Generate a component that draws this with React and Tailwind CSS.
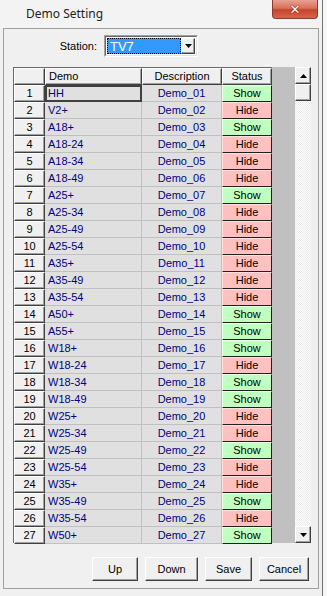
import React from "react";

const rows = [
  ["HH", "Show"], ["V2+", "Hide"], ["A18+", "Show"], ["A18-24", "Hide"], ["A18-34", "Hide"],
  ["A18-49", "Hide"], ["A25+", "Show"], ["A25-34", "Hide"], ["A25-49", "Hide"], ["A25-54", "Hide"],
  ["A35+", "Hide"], ["A35-49", "Hide"], ["A35-54", "Hide"], ["A50+", "Show"], ["A55+", "Show"],
  ["W18+", "Show"], ["W18-24", "Hide"], ["W18-34", "Show"], ["W18-49", "Show"], ["W25+", "Hide"],
  ["W25-34", "Hide"], ["W25-49", "Show"], ["W25-54", "Hide"], ["W35+", "Hide"], ["W35-49", "Show"],
  ["W35-54", "Hide"], ["W50+", "Show"],
];

const raised =
  "border-t border-l border-t-white border-l-white border-r border-b border-r-[#404040] border-b-[#404040] shadow-[inset_-1px_-1px_0_#a0a0a0]";

function Btn({ w, children }) {
  return (
    <div
      className={`${w} h-[24px] flex items-center justify-center bg-[#f0f0f0] text-black ${raised}`}
    >
      {children}
    </div>
  );
}

export default function App() {
  return (
    <div
      className="w-[327px] h-[596px] flex bg-[#f0f0f0] overflow-hidden text-[11px] leading-none text-black"
      style={{ fontFamily: '"Liberation Sans", Arial, sans-serif' }}
    >
      <div className="w-[322px] flex flex-col">
        {/* Title bar */}
        <div className="h-[28px] flex items-start relative bg-[#f3f3f3]">
          <span
            className="pl-[26px] pt-[8px] text-[12px] text-[#1e1e1e]"
            style={{ fontFamily: '"Noto Sans", "Open Sans", sans-serif' }}
          >
            Demo Setting
          </span>
          <div className="absolute top-0 left-[272px] w-[46px] h-[19px] rounded-b-[4px] border border-t-0 border-[#8c3a2e] bg-[linear-gradient(#e8a193_0%,#d9705c_45%,#c7432b_55%,#d5654f_100%)] flex items-center justify-center">
            <span
              className="text-white text-[13px] font-bold leading-none"
              style={{ textShadow: "0 0 1px #5a1a10, 0 0 1px #5a1a10", fontFamily: '"DejaVu Sans", sans-serif' }}
            >
              ✕
            </span>
          </div>
        </div>

        {/* Panel */}
        <div className="ml-[3px] w-[316px] h-[561px] border border-[#a0a0a0] bg-[#f0f0f0] flex flex-col">
          {/* Station row */}
          <div className="mt-[6px] h-[22px] flex items-center">
            <span className="w-[100px] text-right pr-[7px] text-[11px]">Station:</span>
            <div className="w-[94px] h-[22px] border border-t-[#a0a0a0] border-l-[#a0a0a0] border-r-white border-b-white">
              <div className="w-full h-full border border-t-[#696969] border-l-[#696969] border-r-[#e3e3e3] border-b-[#e3e3e3] bg-white flex items-center p-[1px]">
                <div className="w-[75px] h-[16px] bg-[#3399ff] border border-dotted border-[#ff9900] outline outline-1 outline-dotted outline-black -outline-offset-1 flex items-center pl-[2px] text-white text-[13px]">
                  TV7
                </div>
                <div className={`ml-auto w-[14px] h-[16px] bg-[#f0f0f0] ${raised} flex items-center justify-center`}>
                  <svg width="7" height="4" viewBox="0 0 7 4"><path d="M0 0h7L3.5 4z" fill="#000" /></svg>
                </div>
              </div>
            </div>
          </div>

          {/* Grid */}
          <div className="mt-[10px] ml-[9px] w-[298px] h-[476px] flex">
            <div className="w-[259px] flex flex-col border-l border-t border-[#696969]">
              {/* header */}
              <div className="h-[17px] flex shrink-0">
                <div className={`w-[31px] h-[17px] bg-[#f0f0f0] ${raised}`} />
                <div className={`w-[97px] h-[17px] bg-[#f0f0f0] ${raised} flex items-center pl-[3px]`}>Demo</div>
                <div className={`w-[80px] h-[17px] bg-[#f0f0f0] ${raised} flex items-center justify-center`}>Description</div>
                <div className={`w-[50px] h-[17px] bg-[#f0f0f0] ${raised} flex items-center justify-center`}>Status</div>
              </div>
              {rows.map(([demo, status], i) => {
                const n = i + 1;
                const show = status === "Show";
                return (
                  <div key={n} className="h-[17px] flex shrink-0">
                    <div className={`w-[31px] h-[17px] bg-[#f0f0f0] ${raised} flex items-center justify-center`}>{n}</div>
                    {n === 1 ? (
                      <div className="w-[97px] h-[17px] bg-[#e0e0e0] border-2 border-[#404040] flex items-center pl-[1px] text-[#000080]">
                        {demo}
                      </div>
                    ) : (
                      <div className="w-[97px] h-[17px] bg-[#e0e0e0] border-r border-b border-[#c0c0c0] flex items-center pl-[3px] text-[#000080]">
                        {demo}
                      </div>
                    )}
                    <div className="w-[80px] h-[17px] bg-[#e0e0e0] border-r border-b border-[#c0c0c0] flex items-center justify-center text-[#000080]">
                      Demo_{String(n).padStart(2, "0")}
                    </div>
                    <div
                      className={`w-[50px] h-[17px] flex items-center justify-center border-t border-l border-r border-b border-r-[#202020] border-b-[#202020] ${
                        show
                          ? "bg-[#c0ffc0] border-t-[#e8ffe8] border-l-[#e8ffe8]"
                          : "bg-[#ffc0c0] border-t-[#ffe0e0] border-l-[#ffe0e0]"
                      }`}
                    >
                      {status}
                    </div>
                  </div>
                );
              })}
            </div>
            <div className="w-[23px] h-full bg-[#c0c0c0]" />
            <div className="w-[16px] h-full flex flex-col">
              <div className={`h-[17px] bg-[#f0f0f0] ${raised} flex items-center justify-center shrink-0`}>
                <svg width="7" height="4" viewBox="0 0 7 4"><path d="M0 4h7L3.5 0z" fill="#000" /></svg>
              </div>
              <div className={`h-[17px] bg-[#f0f0f0] ${raised} shrink-0`} />
              <div className="flex-1 bg-[repeating-conic-gradient(#ffffff_0%_25%,#ebebeb_0%_50%)] bg-[length:2px_2px]" />
              <div className={`h-[17px] bg-[#f0f0f0] ${raised} flex items-center justify-center shrink-0`}>
                <svg width="7" height="4" viewBox="0 0 7 4"><path d="M0 0h7L3.5 4z" fill="#000" /></svg>
              </div>
            </div>
          </div>

          {/* Buttons */}
          <div className="mt-[14px] ml-[88px] flex gap-[7px] text-[11px]">
            <Btn w="w-[46px]">Up</Btn>
            <Btn w="w-[53px]">Down</Btn>
            <Btn w="w-[47px]">Save</Btn>
            <Btn w="w-[50px]">Cancel</Btn>
          </div>
        </div>
        <div className="flex-1 bg-[#f0f0f0]" />
      </div>
      <div className="w-px h-full bg-[#6f6f6f]" />
      <div className="flex-1 h-full bg-[#f7f7f7]" />
    </div>
  );
}
